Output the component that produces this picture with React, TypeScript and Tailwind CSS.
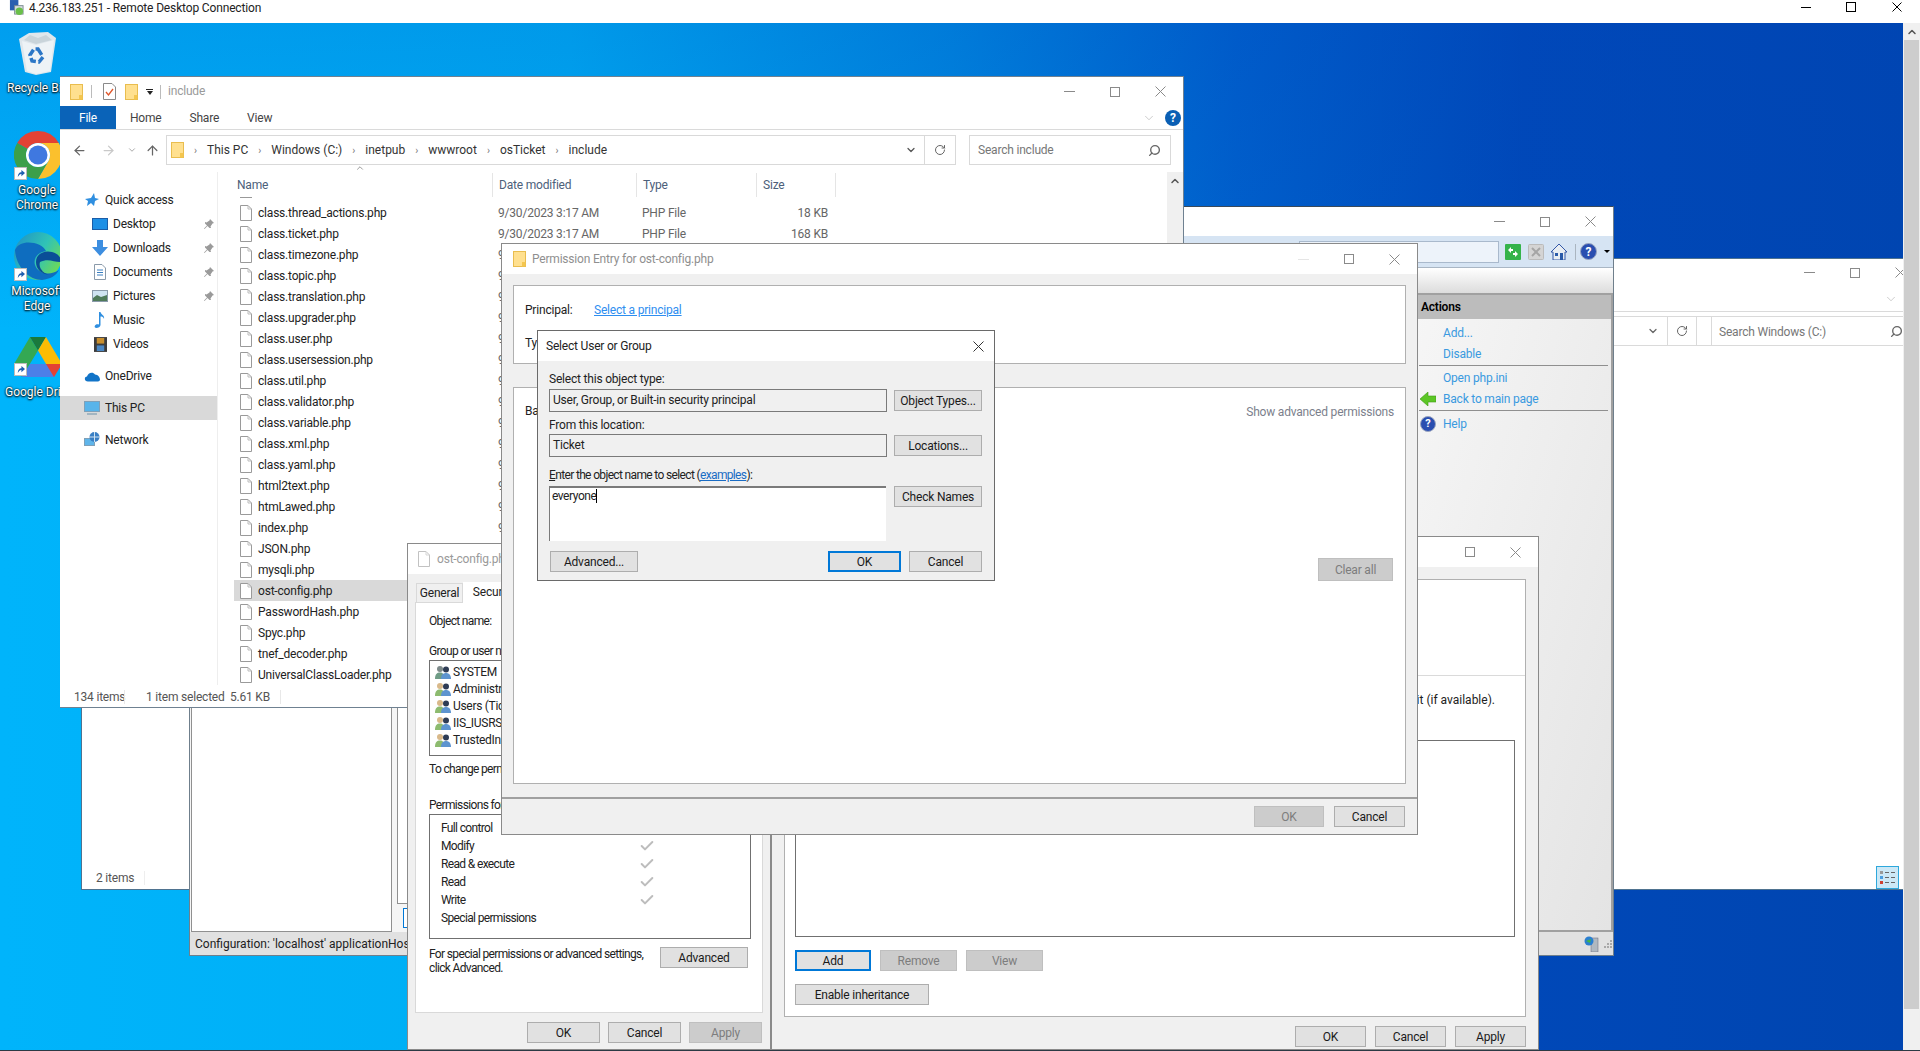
import type { ReactNode } from "react";
import clsx from "clsx";
import { Check, ChevronDown, ChevronUp, RotateCw, Search, ArrowLeft, ArrowRight, ArrowUp } from "lucide-react";

const files = [
  "class.thread_actions.php",
  "class.ticket.php",
  "class.timezone.php",
  "class.topic.php",
  "class.translation.php",
  "class.upgrader.php",
  "class.user.php",
  "class.usersession.php",
  "class.util.php",
  "class.validator.php",
  "class.variable.php",
  "class.xml.php",
  "class.yaml.php",
  "html2text.php",
  "htmLawed.php",
  "index.php",
  "JSON.php",
  "mysqli.php",
  "ost-config.php",
  "PasswordHash.php",
  "Spyc.php",
  "tnef_decoder.php",
  "UniversalClassLoader.php",
];

function Folder({ className }: { className?: string }) {
  return (
    <svg viewBox="0 0 13 16" className={clsx("w-[13px] h-[16px] shrink-0", className)}>
      <rect x="0.5" y="0.5" width="12" height="15" fill="#ffe08f" stroke="#e9bd4e" />
      <rect x="9" y="11" width="3.5" height="4.5" fill="#f4c64f" />
    </svg>
  );
}

function PageIcon({ className }: { className?: string }) {
  return (
    <svg viewBox="0 0 12 16" className={clsx("w-[12px] h-[16px] shrink-0", className)}>
      <path d="M.5.5H8L11.500 4V15.500H.5Z" fill="#fff" stroke="#9a9a9a" />
      <path d="M8 .5V4H11.500" fill="none" stroke="#bdbdbd" />
    </svg>
  );
}

function Controls({ tone = "#8a8a8a", hideMin, minTone }: { tone?: string; hideMin?: boolean; minTone?: string }) {
  return (
    <div className="flex h-full shrink-0 items-center">
      <div className="flex w-[45.5px] justify-center">
        {!hideMin && <div className="h-px w-[11px]" style={{ background: minTone ?? tone }} />}
      </div>
      <div className="flex w-[45.5px] justify-center">
        <div className="h-[10px] w-[10px] border" style={{ borderColor: tone }} />
      </div>
      <div className="flex w-[45.5px] justify-center">
        <svg viewBox="0 0 11 11" className="h-[11px] w-[11px]" stroke={tone} fill="none">
          <path d="M.5.5L10.500 10.500M10.500.5L.5 10.500" />
        </svg>
      </div>
    </div>
  );
}

function Btn({ children, className, off, main }: { children?: ReactNode; className?: string; off?: boolean; main?: boolean }) {
  return (
    <div
      className={clsx(
        "flex h-[21px] shrink-0 items-center justify-center text-[12px] tracking-[-0.2px]",
        off ? "border border-[#bfbfbf] bg-[#cccccc] text-[#7d7d7d]" : "bg-[#e1e1e1] text-[#1a1a1a]",
        !off && (main ? "border-2 border-[#0078d7]" : "border border-[#adadad]"),
        className,
      )}
    >
      {children}
    </div>
  );
}

function Helpdot({ className }: { className?: string }) {
  return (
    <div className={clsx("flex items-center justify-center rounded-full border border-[#9aa5c0] bg-[#2a4eb0] font-bold text-white", className)}>?</div>
  );
}

function Persons({ sys }: { sys?: boolean }) {
  return (
    <svg viewBox="0 0 16 14" className="h-[14px] w-[16px] shrink-0">
      <circle cx="5" cy="4" r="3" fill={sys ? "#7d8a8a" : "#d9b98a"} />
      <path d="M0 14C0 9 2 7.500 5 7.500S9 9 9 14Z" fill={sys ? "#6f9c86" : "#8dbb6f"} />
      <circle cx="11" cy="4.500" r="3" fill="#2e3c55" />
      <path d="M6 14C6 10 8 8 11 8S16 10 16 14Z" fill="#5d94cf" />
    </svg>
  );
}

function Shortcut({ className }: { className?: string }) {
  return (
    <div className={clsx("absolute flex h-[13px] w-[13px] items-center justify-center border border-[#bbb] bg-white", className)}>
      <svg viewBox="0 0 10 10" className="h-[9px] w-[9px]">
        <path d="M2 9C2 5 4 3.500 6 3.500V1L10 4.500 6 8V5.500C4 5.500 3 7 2 9Z" fill="#1f5fb0" />
      </svg>
    </div>
  );
}

function DesktopIcons() {
  const label = "absolute text-center text-[12px] leading-[15px] tracking-normal text-white whitespace-nowrap [text-shadow:0_1px_2px_#000,0_0_2px_#000]";
  return (
    <>
      <svg viewBox="0 0 39 43" className="absolute left-[18px] top-[9px] h-[43px] w-[39px]">
        <path d="M1 7L11 1 30 0 38 6 33 40 18 43 7 40Z" fill="#dfe7ec" />
        <path d="M4 9L18 13 36 8 32 39 18 42 9 39Z" fill="#eef3f6" />
        <path d="M6 8L12 3 20 6 28 3 34 8 18 12Z" fill="#c9d4da" />
        <path d="M20 17L25 25 21 30 14 29 12 23 16 17Z" fill="none" stroke="#2a76c6" strokeWidth="3.500" strokeDasharray="7 2.500" />
      </svg>
      <div className={clsx(label, "left-[7px] top-[58px]")}>Recycle Bin</div>

      <svg viewBox="0 0 48 48" className="absolute left-[14px] top-[108px] h-[48px] w-[48px]">
        <path d="M24 0A24 24 0 0 1 44.800 12H24A12 12 0 0 0 13.600 18L3.200 12A24 24 0 0 1 24 0Z" fill="#e34234" />
        <path d="M44.800 12A24 24 0 0 1 24 48L34.400 30A12 12 0 0 0 34.400 18 12 12 0 0 0 24 12Z" fill="#fbc02d" />
        <path d="M3.200 12A24 24 0 0 0 24 48L34.400 30A12 12 0 0 1 13.600 18Z" fill="#3c9f4a" />
        <circle cx="24" cy="24" r="12" fill="#fff" />
        <circle cx="24" cy="24" r="9.500" fill="#3f78e0" />
      </svg>
      <Shortcut className="left-[14px] top-[144px]" />
      <div className={clsx(label, "left-[7px] top-[160px] w-[60px]")}>Google<br />Chrome</div>

      <svg viewBox="0 0 48 48" className="absolute left-[14px] top-[209px] h-[48px] w-[48px]">
        <defs>
          <linearGradient id="edgeA" x1="0" y1="0" x2="1" y2="0.600">
            <stop offset="0" stopColor="#1d8fc9" />
            <stop offset="0.600" stopColor="#30c3b6" />
            <stop offset="1" stopColor="#6ad85c" />
          </linearGradient>
        </defs>
        <circle cx="24" cy="24" r="24" fill="url(#edgeA)" />
        <path d="M1 18C2 34 14 48 28 48 36 47 42 44 45 38 36 44 24 42 21 33 19 26 24 20 32 19 28 10 6 6 1 18Z" fill="#0e6dbf" />
        <path d="M22 30C22 22 30 18 38 20 46 22 48 28 46 30 40 30 34 26 26 30 24 36 30 42 36 43 28 42 22 38 22 30Z" fill="#0a4d97" />
      </svg>
      <Shortcut className="left-[14px] top-[245px]" />
      <div className={clsx(label, "left-[7px] top-[261px] w-[60px]")}>Microsoft<br />Edge</div>

      <svg viewBox="0 0 48 40" className="absolute left-[14px] top-[314px] h-[40px] w-[48px]">
        <path d="M16 0L0 27 8 40 24 13.500Z" fill="#34a853" />
        <path d="M16 0H32L24 13.500Z" fill="#1a7a3c" />
        <path d="M32 0L48 27H32L24 13.500Z" fill="#fbbc04" />
        <path d="M8 40L16 27H48L40 40Z" fill="#4c7fe8" />
        <path d="M32 27H48L40 40Z" fill="#e34234" />
      </svg>
      <Shortcut className="left-[14px] top-[340px]" />
      <div className={clsx(label, "left-[5px] top-[362px]")}>Google Drive</div>
    </>
  );
}

function SideRow({ icon, text, pin, active, className }: { icon: ReactNode; text: string; pin?: boolean; active?: boolean; className?: string }) {
  return (
    <div className={clsx("flex h-[24px] items-center text-[12px]", active && "bg-[#d9d9d9]", className)}>
      <div className="flex w-[16px] shrink-0 justify-center">{icon}</div>
      <span className="ml-[5px] text-[#222]">{text}</span>
      {pin && (
        <svg viewBox="0 0 12 12" className="ml-auto mr-[2px] h-[12px] w-[12px]">
          <path d="M7 1L11 5 9.500 5.500 7.500 8.500 8 10 6.500 10 4.500 8 1.500 11 1 10.500 4 7.500 2 5.500 2 4 3.500 4.500 6.500 2.500Z" fill="#9a9a9a" />
        </svg>
      )}
    </div>
  );
}

function ExplorerWindow() {
  return (
    <div className="absolute left-[60px] top-[53px] flex h-[632px] w-[1124px] flex-col overflow-hidden border border-[#6f8191] border-l-0 bg-white text-[12px]">
      <div className="flex h-[29px] shrink-0 items-center">
        <Folder className="ml-[10px]" />
        <div className="ml-[8px] h-[13px] w-px bg-[#bbb]" />
        <svg viewBox="0 0 13 17" className="ml-[11px] h-[17px] w-[13px]">
          <path d="M.5.5H9L12.500 4V16.500H.5Z" fill="#fff" stroke="#8a8a8a" />
          <path d="M3 9L5.500 12 10 6" fill="none" stroke="#e0562a" strokeWidth="1.300" />
        </svg>
        <Folder className="ml-[9px]" />
        <div className="ml-[8px] flex flex-col items-center gap-[1px]">
          <div className="h-px w-[7px] bg-[#222]" />
          <div className="h-0 w-0 border-x-[3.500px] border-t-[4px] border-x-transparent border-t-[#222]" />
        </div>
        <div className="ml-[7px] h-[14px] w-px bg-[#bbb]" />
        <span className="ml-[7px] -mt-[2px] text-[#9a9a9a]">include</span>
        <div className="ml-auto"><Controls /></div>
      </div>
      <div className="flex h-[24px] shrink-0 items-center border-b border-[#dadada] text-[#444]">
        <div className="flex h-full w-[56px] items-center justify-center bg-[#0a63b8] pt-[1px] text-white">File</div>
        <span className="ml-[14px] pt-[1px]">Home</span>
        <span className="ml-[28px] pt-[1px]">Share</span>
        <span className="ml-[28px] pt-[1px]">View</span>
        <ChevronDown className="ml-auto mr-[9px] text-[#a8a8a8]" size={14} strokeWidth={1} />
        <div className="mr-[2px] flex h-[16px] w-[16px] items-center justify-center rounded-full bg-[#0a5fb4] text-[12px] font-bold text-white">?</div>
      </div>
      <div className="flex h-[42px] shrink-0 items-center pb-[7px] pt-[5px]">
        <ArrowLeft className="ml-[12px] shrink-0 text-[#666]" size={15} />
        <ArrowRight className="ml-[14px] shrink-0 text-[#c9c9c9]" size={15} />
        <ChevronDown className="ml-[11px] shrink-0 text-[#999]" size={10} />
        <ArrowUp className="ml-[8px] shrink-0 text-[#666]" size={15} />
        <div className="ml-[6px] flex h-[30px] w-[759px] shrink-0 items-center border border-[#d9d9d9] tracking-normal text-[#333]">
          <Folder className="ml-[4px]" />
          {["This PC", "Windows (C:)", "inetpub", "wwwroot", "osTicket", "include"].map((c) => (
            <div key={c} className="flex items-center">
              <span className="mx-[10px] text-[10px] text-[#777]">›</span>
              <span>{c}</span>
            </div>
          ))}
          <ChevronDown className="ml-auto mr-[7px] text-[#555]" size={12} strokeWidth={2.500} />
        </div>
        <div className="flex h-[30px] w-[31px] shrink-0 items-center justify-center border border-l-0 border-[#d9d9d9]">
          <RotateCw className="text-[#666]" size={12} />
        </div>
        <div className="ml-[13px] flex h-[30px] w-[202px] shrink-0 items-center border border-[#d9d9d9] pl-[8px] text-[#777]">
          Search include
          <Search className="ml-auto mr-[9px] -scale-x-100 text-[#666]" size={13} strokeWidth={2.500} />
        </div>
      </div>
      <div className="flex min-h-0 flex-1">
        <div className="w-[158px] shrink-0 border-r border-[#eeeeee] pt-[16px]">
          <SideRow className="pl-[24px]" icon={
            <svg viewBox="0 0 14 14" className="h-[14px] w-[14px]"><path d="M9 0L10 5 14 6 10 8 9 13 6 10 2 13 3 8 0 6 6 5Z" fill="#2f8fe0" /></svg>
          } text="Quick access" />
          <div className="pl-[32px]">
            <SideRow pin icon={<div className="h-[12px] w-[16px] border border-[#1b5da8] bg-[#1e90e6]" />} text="Desktop" />
            <SideRow pin icon={<svg viewBox="0 0 16 16" className="h-[16px] w-[16px]"><path d="M5 0H11V7H16L8 16 0 7H5Z" fill="#3d8ee0" /></svg>} text="Downloads" />
            <SideRow pin icon={<svg viewBox="0 0 12 16" className="h-[16px] w-[12px]"><path d="M.5.5H8L11.500 4V15.500H.5Z" fill="#fff" stroke="#8a9aaa" /><path d="M3 6H9M3 8.500H9M3 11H9" stroke="#3a7ec0" /></svg>} text="Documents" />
            <SideRow pin icon={<svg viewBox="0 0 16 12" className="h-[12px] w-[16px]"><rect x=".5" y=".5" width="15" height="11" fill="#cfe3f2" stroke="#8a9aaa" /><path d="M1 8L5 5 9 7 15 5V11H1Z" fill="#4f7a5a" /></svg>} text="Pictures" />
            <SideRow icon={<svg viewBox="0 0 12 16" className="h-[16px] w-[12px]"><path d="M5 0H6.500C7 3 11 3 10 7 9.500 5 8 4.500 6.500 4.500V13C6.500 15 4 16 2.500 16S0 15 1 13.500 3.500 12 5 12.500Z" fill="#2f8fe0" /></svg>} text="Music" />
            <SideRow icon={<svg viewBox="0 0 14 16" className="h-[15px] w-[13px]"><rect width="14" height="16" fill="#3c3c3c" /><rect x="3" y="1" width="8" height="6" fill="#c98f2e" /><rect x="3" y="9" width="8" height="6" fill="#4a87c4" /></svg>} text="Videos" />
          </div>
          <SideRow className="mt-[8px] pl-[24px]" icon={<svg viewBox="0 0 16 10" className="h-[11px] w-[16px]"><path d="M4 10C0 10 0 5 3 5 4 1 9 0 11 3 14 3 16 6 16 8 16 9 15 10 14 10Z" fill="#1274c8" /></svg>} text="OneDrive" />
          <SideRow active className="mt-[8px] pl-[24px]" icon={<svg viewBox="0 0 16 14" className="h-[14px] w-[16px]"><rect x=".5" y=".5" width="15" height="10" fill="#58b4ea" stroke="#7fa0b8" /><path d="M3 13H13" stroke="#8fa8b8" strokeWidth="1.500" /></svg>} text="This PC" />
          <SideRow className="mt-[8px] pl-[24px]" icon={<svg viewBox="0 0 16 16" className="h-[16px] w-[16px]"><rect x=".5" y="6.500" width="10" height="7" fill="#5fb5ea" stroke="#7fa0b8" /><circle cx="10.500" cy="5" r="5" fill="#3a7fc4" /><path d="M10.500 0V10M5.500 5H15.500" stroke="#cfe3f2" /></svg>} text="Network" />
        </div>
        <div className="min-w-0 flex-1">
          <div className="flex h-[25px] items-center text-[#4c607a]">
            <div className="relative w-[274px] pl-[19px]">
              Name
              <ChevronUp className="absolute left-[137px] top-[-13px] text-[#888]" size={10} />
            </div>
            <div className="w-[144px] border-l border-[#e5e5e5] pl-[6px] leading-[24px]">Date modified</div>
            <div className="w-[120px] border-l border-[#e5e5e5] pl-[6px] leading-[24px]">Type</div>
            <div className="w-[80px] border-x border-[#e5e5e5] pl-[6px] leading-[24px]">Size</div>
          </div>
          <div className="ml-[22px] flex h-[5px] items-start">
            <div className="h-px w-[12px] bg-[#999]" />
          </div>
          {files.map((f, i) => (
            <div key={f} className={clsx("ml-[16px] flex h-[21px] items-center pl-[6px]", f === "ost-config.php" && "bg-[#d9d9d9]")}>
              <PageIcon />
              <span className="ml-[6px] w-[240px] shrink-0 text-[#222]">{f}</span>
              <span className="w-[144px] shrink-0 text-[#666]">9/30/2023 3:17 AM</span>
              {i < 2 && <span className="w-[120px] shrink-0 text-[#666]">PHP File</span>}
              {i < 2 && <span className="w-[66px] shrink-0 text-right text-[#666]">{i === 0 ? "18 KB" : "168 KB"}</span>}
            </div>
          ))}
        </div>
        <div className="flex w-[16px] shrink-0 justify-center bg-[#f0f0f0] pt-[3px]">
          <ChevronUp className="text-[#555]" size={12} strokeWidth={3} />
        </div>
      </div>
      <div className="flex h-[22px] shrink-0 items-center whitespace-nowrap pt-[1px] text-[#555]">
        <span className="ml-[14px] w-[50px]">134 items</span>
        <div className="h-[14px] w-px bg-[#e8e8e8]" />
        <span className="ml-[21px] w-[80px]">1 item selected</span>
        <span className="ml-[4px]">5.61 KB</span>
        <div className="ml-[10px] h-[14px] w-px bg-[#e8e8e8]" />
      </div>
    </div>
  );
}

function BackExplorer() {
  return (
    <div className="absolute left-[81px] top-[235px] flex h-[632px] w-[1842px] flex-col border border-[#4f7390] border-r-0 bg-white text-[12px]">
      <div className="flex h-[27px] shrink-0 justify-end">
        <Controls />
      </div>
      <div className="flex h-[26px] shrink-0 items-center justify-end border-b border-[#dadada] pr-[25px]">
        <ChevronDown className="text-[#a8a8a8]" size={14} strokeWidth={1} />
      </div>
      <div className="mt-[4px] flex h-[30px] shrink-0 justify-end border-y border-[#dadada]">
        <div className="flex w-[20px] items-center"><ChevronDown className="text-[#666]" size={12} strokeWidth={2.500} /></div>
        <div className="flex w-[30px] items-center justify-center border-x border-[#dadada]">
          <RotateCw className="text-[#666]" size={12} />
        </div>
        <div className="ml-[14px] flex w-[212px] items-center whitespace-nowrap border-l border-[#dadada] bg-white pl-[7px] pt-[1px] text-[#777]">
          Search Windows (C:)
          <Search className="ml-auto mr-[20px] -scale-x-100 text-[#666]" size={13} strokeWidth={2.500} />
        </div>
      </div>
      <div className="min-h-0 flex-1" />
      <div className="flex h-[23px] shrink-0 items-center pl-[14px] text-[#555]">
        2 items
        <div className="ml-[10px] h-[14px] w-px bg-[#eeeeee]" />
        <div className="ml-auto mr-[24px] flex h-[23px] w-[23px] flex-col justify-center gap-[2px] border border-[#2ea8dc] bg-[#cce8f6] pl-[3px]">
          {["#999", "#4a9ee0", "#d04030"].map((c) => (
            <div key={c} className="flex items-center gap-[2px]">
              <div className="h-[3px] w-[3px]" style={{ background: c }} />
              <div className="h-px w-[4px] bg-[#666]" />
              <div className="h-px w-[4px] bg-[#666]" />
            </div>
          ))}
        </div>
      </div>
    </div>
  );
}

function IisWindow() {
  const link = "text-[12px] text-[#3a9ae0] pl-[25px] leading-[21px]";
  return (
    <div className="absolute left-[189px] top-[183px] flex h-[750px] w-[1425px] flex-col border border-[#6f7f8c] border-t-[#3a4a5a] bg-white">
      <div className="flex h-[29px] shrink-0 justify-end">
        <Controls />
      </div>
      <div className="flex h-[32px] shrink-0 items-center justify-end border-b border-[#a9b6c4] bg-[#d6e4f3] pr-[3px]">
        <div className="mr-[6px] h-[22px] w-[200px] border border-[#a9b9cc] bg-[#edf3fa]" />
        <svg viewBox="0 0 16 16" className="h-[16px] w-[16px]"><rect width="16" height="16" rx="1" fill="#34b34a" /><path d="M3 6L6 3V5H8V7H6V9ZM13 10L10 13V11H8V9H10V7Z" fill="#fff" /></svg>
        <svg viewBox="0 0 16 16" className="ml-[7px] h-[16px] w-[16px]"><rect x=".5" y=".5" width="15" height="15" rx="1" fill="#d4d4d4" stroke="#bbb" /><path d="M4 4L12 12M12 4L4 12" stroke="#a5a5a5" strokeWidth="2" /></svg>
        <svg viewBox="0 0 16 16" className="ml-[7px] h-[16px] w-[16px]"><path d="M8 0L16 8H14V16H2V8H0Z" fill="#e8edf2" stroke="#3458a8" /><rect x="9" y="9" width="3" height="7" fill="#2a5aa8" /><rect x="4" y="9" width="3" height="3" fill="#2a5aa8" /></svg>
        <div className="ml-[8px] h-[16px] w-px bg-[#aab5c0]" />
        <Helpdot className="ml-[4px] h-[17px] w-[17px] text-[12px]" />
        <div className="ml-[7px] h-0 w-0 border-x-[3px] border-t-[3px] border-x-transparent border-t-black" />
      </div>
      <div className="h-[25px] shrink-0 bg-gradient-to-b from-white to-[#dcdcdc]" />
      <div className="flex min-h-0 flex-1 bg-[#f5f5f5]">
        <div className="ml-[1px] h-full w-[201px] shrink-0 border border-[#909090] bg-white" />
        <div className="ml-[5px] flex min-w-0 flex-1 flex-col">
          <div className="min-h-0 flex-1 border border-[#909090] bg-white" />
          <div className="h-[28px] shrink-0 pl-[6px] pt-[4px]">
            <div className="h-[20px] w-[40px] border border-[#0078d7] bg-white" />
          </div>
        </div>
        <div className="w-[197px] shrink-0 border-2 border-[#a0a0a0] bg-gradient-to-br from-[#f6f6f6] to-[#e4e4e4]">
          <div className="flex h-[24px] items-center bg-[#bcbcbc] pl-[3px] text-[12px] font-semibold text-black">Actions</div>
          <div className={clsx(link, "mt-[4px]")}>Add...</div>
          <div className={link}>Disable</div>
          <div className="ml-[1px] mr-[3px] h-px bg-[#8f8f8f]" />
          <div className={clsx(link, "mt-[2px] leading-[20px]")}>Open php.ini</div>
          <div className="relative">
            <svg viewBox="0 0 16 14" className="absolute left-[2px] top-[3px] h-[14px] w-[16px]"><path d="M0 7L8 0V4H16V10H8V14Z" fill="#5cc626" stroke="#3f9a16" strokeWidth=".6" /></svg>
            <div className={link}>Back to main page</div>
          </div>
          <div className="ml-[1px] mr-[3px] h-px bg-[#8f8f8f]" />
          <div className="relative mt-[3px]">
            <Helpdot className="absolute left-[2px] top-[2px] h-[16px] w-[16px] text-[11px]" />
            <div className={link}>Help</div>
          </div>
        </div>
      </div>
      <div className="flex h-[23px] shrink-0 items-center bg-[#e1e1e1] pl-[5px] text-[12px] tracking-normal text-[#222]">
        <span className="whitespace-nowrap">Configuration: 'localhost' applicationHost.config</span>
        <div className="ml-auto flex items-center pr-[1px]">
          <svg viewBox="0 0 18 16" className="h-[16px] w-[18px]"><rect x="7" y="2" width="7" height="14" fill="#b0b8c0" stroke="#667" strokeWidth=".5" /><circle cx="5" cy="5" r="4.500" fill="#2a7fd0" /><path d="M2 5L7 3 6 7Z" fill="#44b544" /></svg>
          <div className="ml-[2px] grid grid-cols-3 gap-[1px]">
            {[0, 1, 2, 3, 4, 5, 6, 7, 8].map((n) => (
              <div key={n} className={clsx("h-[2px] w-[2px]", n === 0 || n === 1 || n === 3 ? "bg-transparent" : "bg-[#a8a8a8]")} />
            ))}
          </div>
        </div>
      </div>
    </div>
  );
}

function PropertiesWindow() {
  const perms = ["Full control", "Modify", "Read & execute", "Read", "Write", "Special permissions"];
  const users = ["SYSTEM", "Administrators (Ticket\\Administrators)", "Users (Ticket\\Users)", "IIS_IUSRS (Ticket\\IIS_IUSRS)", "TrustedInstaller"];
  return (
    <div className="absolute left-[407px] top-[520px] flex h-[507px] w-[364px] flex-col border border-[#8a8a8a] bg-[#f0f0f0] text-[12px] text-[#222]">
      <div className="flex h-[30px] shrink-0 items-center bg-white pl-[10px]">
        <PageIcon className="opacity-60" />
        <span className="ml-[7px] text-[#9a9a9a]">ost-config.php Properties</span>
      </div>
      <div className="flex h-[28px] shrink-0 items-end pl-[8px]">
        <div className="flex h-[19px] w-[47px] items-center justify-center border border-b-0 border-[#d9d9d9] bg-[#f0f0f0]">General</div>
        <div className="relative -mb-px flex h-[21px] w-[58px] items-start justify-center bg-white pl-[3px] pt-[1px]">Security</div>
      </div>
      <div className="mx-[7px] flex h-[411px] shrink-0 flex-col border border-[#d9d9d9] bg-white pl-[13px] pr-[11px] tracking-[-0.65px]">
        <div className="mt-[10px] h-[16px] leading-[16px]">Object name:</div>
        <div className="mt-[14px] h-[16px] leading-[16px]">Group or user names:</div>
        <div className="mt-[1px] h-[96px] shrink-0 border border-[#707070] px-[5px] pt-[2px] tracking-[-0.3px]">
          {users.map((u, i) => (
            <div key={u} className="flex h-[17px] items-center">
              <Persons sys={i === 0} />
              <span className="ml-[2px] whitespace-nowrap">{u}</span>
            </div>
          ))}
        </div>
        <div className="mt-[5px] h-[16px] leading-[16px]">To change permissions, click Edit.</div>
        <div className="mt-[20px] h-[16px] leading-[16px]">Permissions for SYSTEM</div>
        <div className="mt-[1px] h-[125px] shrink-0 border border-[#707070] pl-[11px] pt-[4px]">
          {perms.map((p, i) => (
            <div key={p} className="flex h-[18px] items-center">
              <span className="w-[198px] shrink-0">{p}</span>
              {i > 0 && i < 5 && <Check className="text-[#bdbdbd]" size={16} strokeWidth={3} />}
            </div>
          ))}
        </div>
        <div className="mt-[7px] flex items-start justify-between pr-[3px]">
          <div className="mt-[1px] whitespace-nowrap leading-[14px]">For special permissions or advanced settings,<br />click Advanced.</div>
          <Btn className="mt-[1px] w-[88px]">Advanced</Btn>
        </div>
      </div>
      <div className="mt-[9px] flex justify-end gap-[8px] pr-[8px]">
        <Btn className="w-[73px]">OK</Btn>
        <Btn className="w-[73px]">Cancel</Btn>
        <Btn off className="w-[73px]">Apply</Btn>
      </div>
    </div>
  );
}

function AdvancedWindow() {
  return (
    <div className="absolute left-[771px] top-[513px] flex h-[514px] w-[768px] flex-col border border-[#8a8a8a] bg-[#f0f0f0] text-[12px] text-[#222]">
      <div className="flex h-[30px] shrink-0 justify-end bg-white"><Controls hideMin /></div>
      <div className="mx-[12px] mt-[12px] flex h-[438px] shrink-0 flex-col border border-[#b0b0b0] bg-white px-[10px]">
        <div className="-mx-[10px] mt-[95px] border-t border-[#dadada]" />
        <div className="mt-[16px] h-[16px] pr-[20px] text-right leading-[16px] tracking-normal">select the entry and click Edit (if available).</div>
        <div className="mt-[32px] h-[197px] shrink-0 border border-[#707070]" />
        <div className="mt-[13px] flex gap-[9px]">
          <Btn main className="w-[76px]">Add</Btn>
          <Btn off className="w-[77px]">Remove</Btn>
          <Btn off className="w-[77px]">View</Btn>
        </div>
        <Btn className="mt-[13px] w-[134px]">Enable inheritance</Btn>
      </div>
      <div className="mt-[9px] flex justify-end gap-[9px] pr-[12px]">
        <Btn className="w-[71px]">OK</Btn>
        <Btn className="w-[71px]">Cancel</Btn>
        <Btn className="w-[71px]">Apply</Btn>
      </div>
    </div>
  );
}

function PermissionWindow() {
  return (
    <div className="absolute left-[501px] top-[220px] flex h-[592px] w-[917px] flex-col border border-[#8a8a8a] bg-[#f0f0f0] text-[12px] text-[#222]">
      <div className="flex h-[30px] shrink-0 items-center bg-white pl-[11px]">
        <Folder />
        <span className="ml-[6px] text-[#8f8f8f]">Permission Entry for ost-config.php</span>
        <div className="ml-auto"><Controls minTone="#e5e5e5" /></div>
      </div>
      <div className="mx-[11px] mt-[11px] h-[79px] shrink-0 border border-[#b0b0b0] bg-white px-[11px] pt-[16px]">
        <div className="flex h-[16px] items-center">
          <span className="w-[69px]">Principal:</span>
          <span className="text-[#2e8ef0] underline">Select a principal</span>
        </div>
        <div className="mt-[17px] h-[16px] leading-[16px]">Type:</div>
      </div>
      <div className="mx-[11px] mt-[23px] flex h-[397px] shrink-0 flex-col border border-[#b0b0b0] bg-white px-[11px] pt-[15px]">
        <div className="flex h-[16px] items-center justify-between">
          <span>Basic permissions:</span>
          <span className="mt-[1px] text-[#7c7f8c]">Show advanced permissions</span>
        </div>
        <div className="mt-[139px] flex justify-end pr-[1px]">
          <Btn off className="h-[23px] w-[75px]">Clear all</Btn>
        </div>
      </div>
      <div className="mt-[13px] flex h-[38px] shrink-0 items-start justify-end gap-[10px] border-t-2 border-[#a0a0a0] pr-[12px] pt-[7px]">
        <Btn off className="w-[70px]">OK</Btn>
        <Btn className="w-[71px]">Cancel</Btn>
      </div>
    </div>
  );
}

function SelectWindow() {
  const box = "flex h-[23px] w-[338px] shrink-0 items-center border border-[#7a7a7a] pl-[3px]";
  return (
    <div className="absolute left-[537px] top-[307px] z-10 flex h-[251px] w-[458px] flex-col border border-[#6a6a6a] bg-[#f0f0f0] text-[12px] text-[#222]">
      <div className="flex h-[30px] shrink-0 items-center justify-between bg-white pl-[8px] pr-[10px]">
        <span className="text-[#222]">Select User or Group</span>
        <svg viewBox="0 0 11 11" className="h-[11px] w-[11px]" stroke="#333" fill="none"><path d="M.5.5L10.500 10.500M10.500.5L.5 10.500" /></svg>
      </div>
      <div className="flex flex-1 flex-col pl-[11px] pr-[12px] pt-[10px]">
        <div className="h-[16px] leading-[16px]">Select this object type:</div>
        <div className="mt-[2px] flex gap-[7px]">
          <div className={box}><span className="-mt-[2px]">User, Group, or Built-in security principal</span></div>
          <Btn className="mt-[1px] w-[88px]">Object Types...</Btn>
        </div>
        <div className="mt-[5px] h-[16px] leading-[16px]">From this location:</div>
        <div className="mt-[1px] flex gap-[7px]">
          <div className={box}><span className="-mt-[2px]">Ticket</span></div>
          <Btn className="mt-[1px] w-[88px]">Locations...</Btn>
        </div>
        <div className="mt-[10px] h-[16px] whitespace-nowrap leading-[16px] tracking-[-0.65px]">
          <span className="underline">E</span>nter the object name to select (<span className="text-[#1a6cc4] underline">examples</span>):
        </div>
        <div className="mt-[3px] flex gap-[8px]">
          <div className="h-[55px] w-[337px] shrink-0 border-l border-t-2 border-[#7a7a7a] border-r-[#dcdcdc] bg-white pl-[2px]">
            <div className="flex h-[16px] items-center tracking-[-0.45px]"><span>everyone</span><div className="h-[14px] w-px bg-black" /></div>
          </div>
          <Btn className="w-[88px]">Check Names</Btn>
        </div>
        <div className="mt-[10px] flex items-center">
          <Btn className="ml-[1px] w-[88px]">Advanced...</Btn>
          <Btn main className="ml-auto w-[73px]">OK</Btn>
          <Btn className="ml-[8px] w-[73px]">Cancel</Btn>
        </div>
      </div>
    </div>
  );
}

export default function App() {
  return (
    <div className="flex h-[1051px] w-[1920px] flex-col overflow-hidden border-b border-[#2c3a44] bg-white font-['Roboto',sans-serif] tracking-[-0.2px]">
      <div className="flex h-[23px] shrink-0 items-start text-[12px] tracking-[-0.15px] text-[#222]">
        <svg viewBox="0 0 16 17" className="ml-[9px] h-[16px] w-[15px]">
          <rect x="1" y="0" width="9" height="11" fill="#2a5fb0" />
          <rect x="6" y="6" width="9" height="9" fill="#d8dde2" stroke="#7a8a90" />
          <circle cx="11" cy="12" r="4" fill="#6abf4a" />
        </svg>
        <span className="ml-[5px] leading-[16px]">4.236.183.251 - Remote Desktop Connection</span>
        <div className="ml-auto flex items-start pr-[18px] pt-[2px]">
          <div className="mt-[5px] h-px w-[10px] bg-black" />
          <div className="ml-[35px] h-[10px] w-[10px] border border-black" />
          <svg viewBox="0 0 10 10" className="ml-[36px] h-[10px] w-[10px]" stroke="#000" fill="none">
            <path d="M.5.5L9.500 9.500M9.500.5L.5 9.500" />
          </svg>
        </div>
      </div>
      <div className="flex min-h-0 flex-1">
        <div className="relative min-w-0 flex-1 overflow-hidden bg-[linear-gradient(180deg,rgba(0,70,190,0.2)_0%,rgba(0,70,190,0)_30%),linear-gradient(90deg,#00b4fb_0%,#00aef4_30%,#0088e0_50%,#0060cc_65%,#0048b8_80%,#0045b0_100%)]">
          <DesktopIcons />
          <BackExplorer />
          <IisWindow />
          <ExplorerWindow />
          <PropertiesWindow />
          <AdvancedWindow />
          <PermissionWindow />
          <SelectWindow />
        </div>
        <div className="flex w-[17px] shrink-0 flex-col bg-[#f0f0f0]">
          <div className="flex h-[17px] shrink-0 items-center justify-center">
            <ChevronUp className="text-[#555]" size={12} strokeWidth={3} />
          </div>
          <div className="mx-[1px] h-[969px] bg-[#cdcdcd]" />
        </div>
      </div>
    </div>
  );
}
